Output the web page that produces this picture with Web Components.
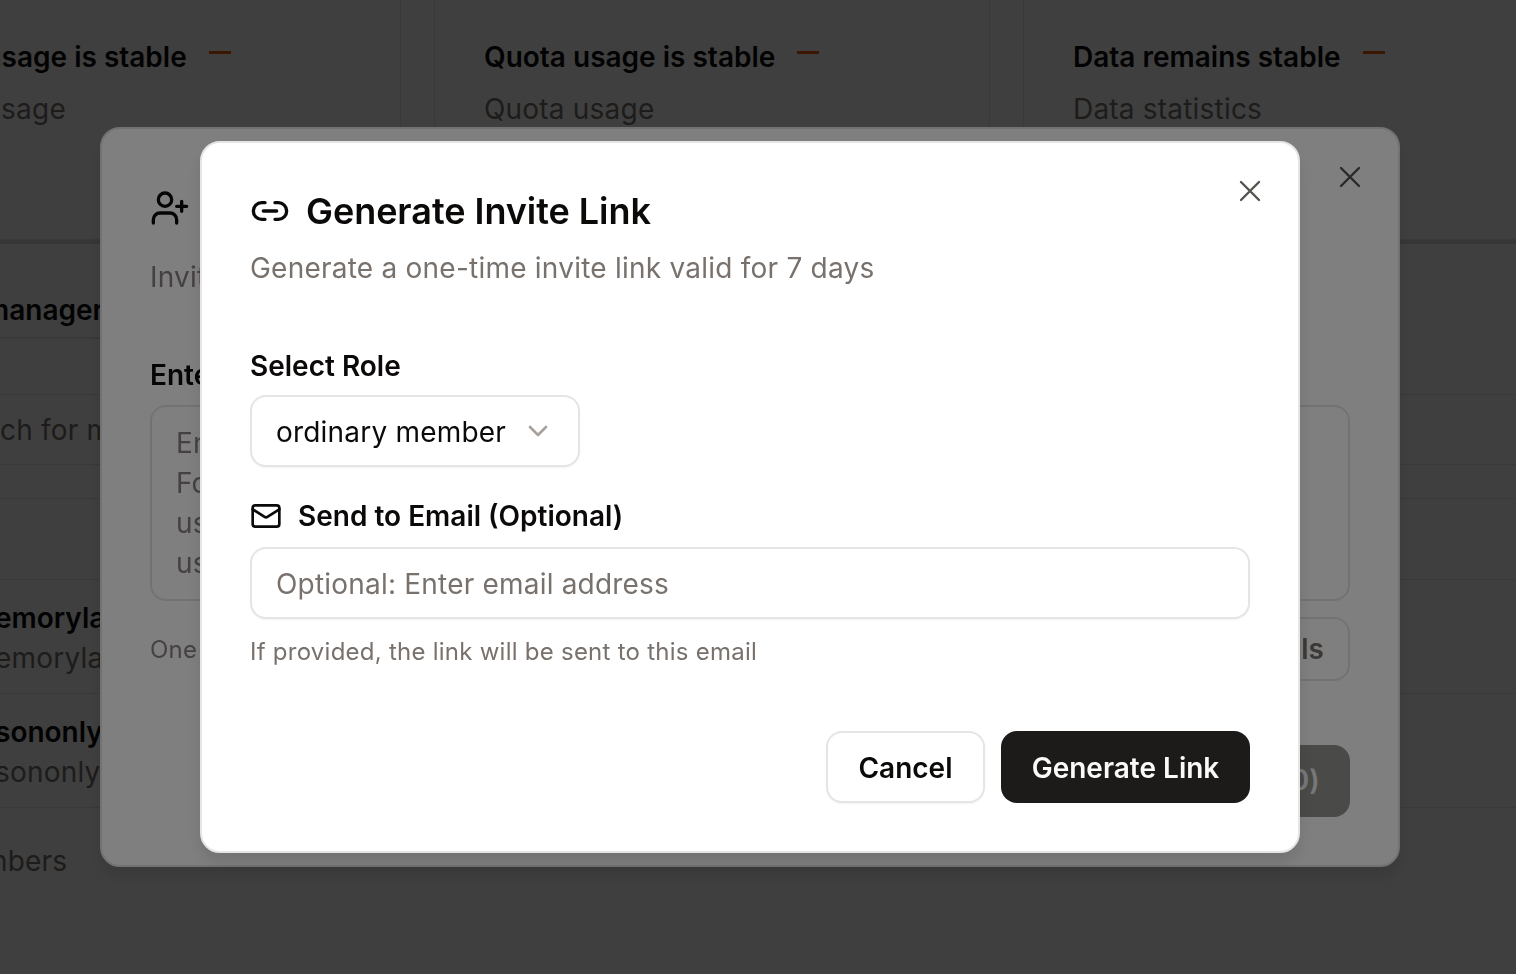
<!DOCTYPE html>
<html lang="en">
<head>
<meta charset="utf-8">
<title>Generate Invite Link</title>
<style>
  html, body { margin: 0; height: 100%; overflow: hidden; }
  body { font-family: "Inter", "Noto Sans", sans-serif; color: #0c0a09; background: #fff; letter-spacing: .2px; }
</style>
</head>
<body>
<members-page></members-page>
<modal-layer>
  <invite-dialog>
    <invite-link-dialog></invite-link-dialog>
  </invite-dialog>
</modal-layer>

<script>
const xIcon = `<svg width="36" height="36" viewBox="0 0 24 24" fill="none" stroke="currentColor" stroke-width="1.6" stroke-linecap="round"><path d="M18 6 6 18M6 6l12 12"/></svg>`;

class StatCard extends HTMLElement {
  constructor() {
    super();
    this.attachShadow({ mode: "open" });
    this.shadowRoot.innerHTML = `
      <style>
        :host { display: block; box-sizing: border-box; width: 556px; height: 240px; border: 1px solid #e7e5e4; border-top: 0; padding: 37px 48px 0 49px; }
        .t { display: flex; align-items: center; gap: 22px; font-size: 28px; font-weight: 600; letter-spacing: 0; line-height: 40px; white-space: nowrap; }
        .t i { width: 22px; height: 3px; background: #ea580c; margin-top: -10px; }
        .s { margin-top: 12px; font-size: 28px; line-height: 40px; color: #78716c; white-space: nowrap; }
      </style>
      <div class="t"><span><slot name="title"></slot></span><i></i></div>
      <div class="s"><slot name="sub"></slot></div>`;
  }
}
customElements.define("stat-card", StatCard);

class MembersPage extends HTMLElement {
  constructor() {
    super();
    this.attachShadow({ mode: "open" });
    this.shadowRoot.innerHTML = `
      <style>
        :host { display: block; width: 1516px; height: 974px; overflow: hidden; font-size: 28px; }
        .cards { display: flex; gap: 33px; margin-left: -155px; height: 240px; border-bottom: 4px solid #dcdad8; width: 1800px; }
        .tab { margin-top: 35px; height: 58px; width: 130px; border-radius: 0 10px 10px 0; background: #fff; box-shadow: 0 1px 3px rgba(0,0,0,.2); font-weight: 600; letter-spacing: 0; line-height: 62px; text-indent: -16px; white-space: nowrap; overflow: hidden; }
        .line { border-bottom: 1px solid #e7e5e4; box-sizing: border-box; white-space: nowrap; overflow: hidden; }
        .h { height: 70px; color: #78716c; line-height: 70px; }
        .row { height: 114px; padding-top: 18px; text-indent: -5px; }
        .b { font-weight: 600; letter-spacing: 0; line-height: 40px; }
        .m { color: #78716c; line-height: 40px; }
        .total { margin-top: 19px; line-height: 68px; color: #78716c; text-indent: -9px; }
      </style>
      <div class="cards">
        <stat-card><span slot="title">Token usage is stable</span><span slot="sub">Token usage</span></stat-card>
        <stat-card><span slot="title">Quota usage is stable</span><span slot="sub">Quota usage</span></stat-card>
        <stat-card><span slot="title">Data remains stable</span><span slot="sub">Data statistics</span></stat-card>
      </div>
      <div class="tab">manager</div>
      <div class="line" style="height:58px"></div>
      <div class="line h">ch for members</div>
      <div class="line" style="height:34px"></div>
      <div class="line" style="height:81px"></div>
      <div class="line row"><div class="b">emorylane</div><div class="m">emorylane</div></div>
      <div class="line row"><div class="b">sononly</div><div class="m">sononly</div></div>
      <div class="total">nbers</div>
    `;
  }
}
customElements.define("members-page", MembersPage);

class ModalLayer extends HTMLElement {
  constructor() {
    super();
    this.attachShadow({ mode: "open" });
    this.shadowRoot.innerHTML = `
      <style>
        :host { position: fixed; inset: 0; box-sizing: border-box; padding-right: 16px; background: rgba(0,0,0,.5); display: grid; place-items: center; }
      </style>
      <slot></slot>`;
  }
}
customElements.define("modal-layer", ModalLayer);

class InviteDialog extends HTMLElement {
  constructor() {
    super();
    this.attachShadow({ mode: "open" });
    this.shadowRoot.innerHTML = `
      <style>
        :host { display: block; position: relative; box-sizing: border-box; width: 1300px; height: 740px; margin-top: 20px; padding: 48px; background: #fff; border: 2px solid #e7e5e4; border-radius: 20px; box-shadow: 0 10px 15px rgba(0,0,0,.1); font-size: 28px; }
        .close { position: absolute; top: 30px; right: 30px; color: #57534e; display: flex; }
        .head { display: flex; gap: 14px; align-items: center; font-size: 36px; font-weight: 600; height: 40px; padding-top: 11px; }
        .sub { margin-top: 29px; color: #8a8380; line-height: 40px; }
        .lbl { margin-top: 58px; font-weight: 600; letter-spacing: 0; line-height: 40px; }
        .area { margin-top: 10px; box-sizing: border-box; height: 196px; border: 2px solid #e7e5e4; border-radius: 16px; padding: 16px 24px; line-height: 40px; color: #8a8380; }
        .foot { display: flex; justify-content: space-between; align-items: center; margin-top: 16px; }
        .foot span { font-size: 24px; color: #8a8380; }
        .foot b { display: block; width: 200px; height: 64px; line-height: 60px; box-sizing: border-box; border: 2px solid #e7e5e4; border-radius: 16px; text-align: right; padding-right: 24px; font-weight: 600; letter-spacing: 0; color: #78716c; }
        .send { position: absolute; right: 48px; bottom: 48px; width: 300px; height: 72px; box-sizing: border-box; border-radius: 16px; background: #959493; color: #f0f0f0; font-weight: 600; line-height: 70px; text-align: right; padding-right: 30px; }
        /* second backdrop covers the whole window, not only this dialog */
        .over { position: fixed; inset: 0; box-sizing: border-box; padding-right: 16px; background: rgba(0,0,0,.5); display: grid; place-items: center; }
      </style>
      <div class="close">${xIcon}</div>
      <div class="head">
        <svg width="40" height="40" viewBox="0 0 24 24" fill="none" stroke="currentColor" stroke-width="2" stroke-linecap="round" stroke-linejoin="round"><path d="M16 21v-2a4 4 0 0 0-4-4H6a4 4 0 0 0-4 4v2"/><circle cx="9" cy="7" r="4"/><path d="M19 8v6M22 11h-6"/></svg>
        <span>Invite Members</span>
      </div>
      <div class="sub">Invite members to the workspace</div>
      <div class="lbl">Enter usernames</div>
      <div class="area">Enter usernames<br>For example:<br>user1<br>user2</div>
      <div class="foot"><span>One username per line</span><b>Details</b></div>
      <div class="send">Invite (0)</div>
      <div class="over"><slot></slot></div>`;
  }
}
customElements.define("invite-dialog", InviteDialog);

class InviteLinkDialog extends HTMLElement {
  constructor() {
    super();
    this.attachShadow({ mode: "open" });
    this.shadowRoot.innerHTML = `
      <style>
        :host { display: block; position: relative; box-sizing: border-box; width: 1100px; height: 712px; margin-top: 20px; padding: 48px; background: #fff; border: 2px solid #e7e5e4; border-radius: 20px; box-shadow: 0 10px 15px rgba(0,0,0,.1); color: #0c0a09; font-size: 28px; }
        .close { position: absolute; top: 30px; right: 30px; color: #57534e; display: flex; }
        .head { display: flex; align-items: center; gap: 16px; height: 40px; font-size: 36px; font-weight: 600; line-height: 40px; letter-spacing: -.05px; }
        .sub { margin-top: 17px; line-height: 40px; color: #78716c; letter-spacing: .23px; }
        .lbl { display: flex; align-items: center; gap: 16px; font-weight: 600; letter-spacing: 0; line-height: 40px; }
        .role { margin-top: 58px; }
        .field { box-sizing: border-box; height: 72px; border: 2px solid #e7e5e4; border-radius: 16px; background: #fff; box-shadow: 0 1px 2px rgba(0,0,0,.05); display: flex; align-items: center; padding: 1px 24px 0; }
        .select { width: 330px; margin-top: 9px; justify-content: space-between; }
        .select svg { color: #a8a29e; flex: none; margin-top: -1px; }
        .mail { margin-top: 29px; }
        .input { margin-top: 11px; color: #78716c; }
        .hint { margin-top: 13px; font-size: 24px; line-height: 40px; color: #78716c; letter-spacing: .25px; }
        .foot { position: absolute; right: 48px; bottom: 48px; display: flex; gap: 16px; }
        .btn { box-sizing: border-box; height: 72px; padding-top: 1px; border-radius: 16px; display: flex; align-items: center; justify-content: center; font-weight: 600; letter-spacing: 0; }
        .cancel { width: 159px; border: 2px solid #e7e5e4; background: #fff; box-shadow: 0 1px 2px rgba(0,0,0,.05); }
        .go { width: 249px; background: #1c1b19; color: #fafaf9; }
      </style>
      <div class="close">${xIcon}</div>
      <div class="head">
        <svg width="40" height="40" viewBox="0 0 24 24" fill="none" stroke="currentColor" stroke-width="2" stroke-linecap="round" stroke-linejoin="round"><path d="M9 17H7A5 5 0 0 1 7 7h2M15 7h2a5 5 0 1 1 0 10h-2M8 12h8"/></svg>
        <span>Generate Invite Link</span>
      </div>
      <div class="sub">Generate a one-time invite link valid for 7 days</div>
      <div class="lbl role">Select Role</div>
      <div class="field select"><span>ordinary member</span><svg width="32" height="32" viewBox="0 0 24 24" fill="none" stroke="currentColor" stroke-width="2" stroke-linecap="round" stroke-linejoin="round"><path d="m6 9 6 6 6-6"/></svg></div>
      <div class="lbl mail">
        <svg width="32" height="32" viewBox="0 0 24 24" fill="none" stroke="currentColor" stroke-width="2" stroke-linecap="round" stroke-linejoin="round"><rect x="2" y="4" width="20" height="16" rx="2"/><path d="m22 7-8.97 5.7a1.94 1.94 0 0 1-2.06 0L2 7"/></svg>
        <span>Send to Email (Optional)</span>
      </div>
      <div class="field input">Optional: Enter email address</div>
      <div class="hint">If provided, the link will be sent to this email</div>
      <div class="foot">
        <div class="btn cancel">Cancel</div>
        <div class="btn go">Generate Link</div>
      </div>`;
  }
}
customElements.define("invite-link-dialog", InviteLinkDialog);
</script>
</body>
</html>
